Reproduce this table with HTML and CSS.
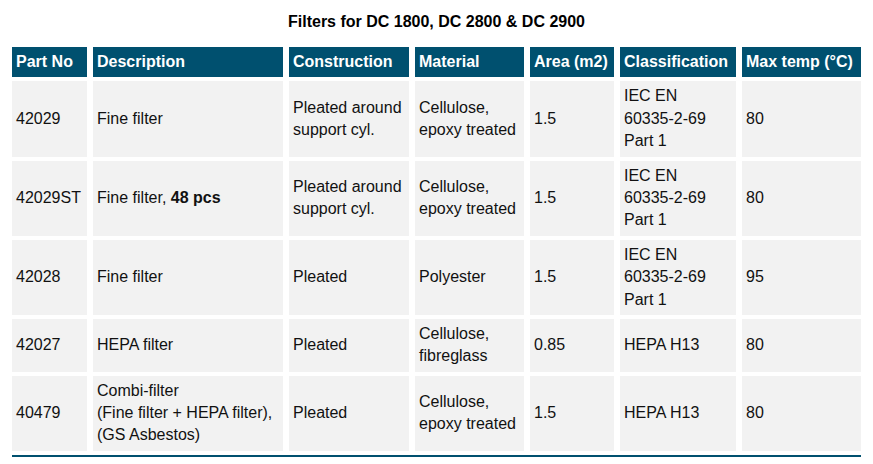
FILE: index.html
```html
<!DOCTYPE html>
<html>
<head>
<meta charset="utf-8">
<link rel="stylesheet" href="styles.css">
</head>
<body>
<div class="page">
  <h1 class="title">Filters for DC 1800, DC 2800 &amp; DC 2900</h1>
  <table class="filters">
    <colgroup>
      <col class="c1"><col class="c2"><col class="c3"><col class="c4"><col class="c5"><col class="c6"><col class="c7">
    </colgroup>
    <thead>
      <tr>
        <th>Part No</th><th>Description</th><th>Construction</th><th>Material</th><th>Area (m2)</th><th>Classification</th><th>Max temp (°C)</th>
      </tr>
    </thead>
    <tbody>
      <tr>
        <td>42029</td><td>Fine filter</td><td>Pleated around support cyl.</td><td>Cellulose, epoxy treated</td><td>1.5</td><td>IEC EN<br><span class="nw">60335-2-69</span><br>Part 1</td><td>80</td>
      </tr>
      <tr>
        <td>42029ST</td><td>Fine filter, <strong>48 pcs</strong></td><td>Pleated around support cyl.</td><td>Cellulose, epoxy treated</td><td>1.5</td><td>IEC EN<br><span class="nw">60335-2-69</span><br>Part 1</td><td>80</td>
      </tr>
      <tr>
        <td>42028</td><td>Fine filter</td><td>Pleated</td><td>Polyester</td><td>1.5</td><td>IEC EN<br><span class="nw">60335-2-69</span><br>Part 1</td><td>95</td>
      </tr>
      <tr>
        <td>42027</td><td>HEPA filter</td><td>Pleated</td><td>Cellulose, fibreglass</td><td>0.85</td><td>HEPA H13</td><td>80</td>
      </tr>
      <tr>
        <td>40479</td><td>Combi-filter<br>(Fine filter + HEPA filter), (GS Asbestos)</td><td>Pleated</td><td>Cellulose, epoxy treated</td><td>1.5</td><td>HEPA H13</td><td>80</td>
      </tr>
    </tbody>
  </table>
  <div class="rule"></div>
</div>
</body>
</html>
```
FILE: styles.css
```css
html, body {
  margin: 0;
  padding: 0;
  background: #ffffff;
}
.page {
  padding: 11px 12px 0 12px;
  font-family: "Liberation Sans", Arial, sans-serif;
  font-size: 16px;
  color: #111111;
}
.title {
  margin: 0 0 10px 0;
  font-size: 16px;
  line-height: 22px;
  font-weight: bold;
  text-align: center;
  color: #000000;
}
.filters {
  table-layout: fixed;
  width: 861px;
  margin: 0 -6px;
  border-collapse: separate;
  border-spacing: 6px 4px;
}
.c1 { width: 75px; }
.c2 { width: 190px; }
.c3 { width: 120px; }
.c4 { width: 109px; }
.c5 { width: 84px; }
.c6 { width: 116px; }
.c7 { width: 119px; }
.filters th,
.filters td {
  padding: 4px;
  line-height: 1.4;
  text-align: left;
  vertical-align: middle;
}
.filters th {
  background: #00506f;
  color: #ffffff;
  font-weight: bold;
  white-space: nowrap;
}
.filters td {
  background: #f2f2f2;
}
.nw {
  white-space: nowrap;
}
.rule {
  height: 2px;
  background: #00506f;
}
```
